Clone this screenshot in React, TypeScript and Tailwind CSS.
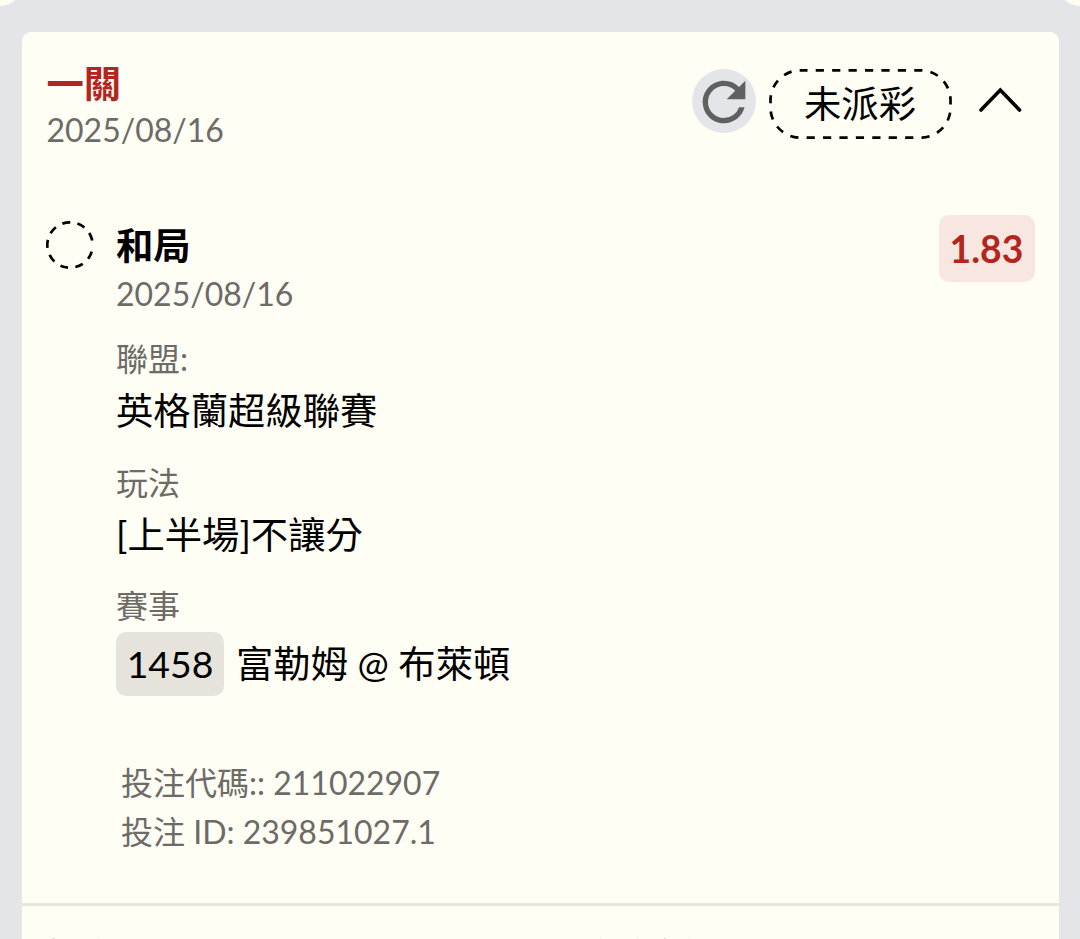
import type { ReactNode } from "react";
import { MdRefresh } from "react-icons/md";

const bet = {
  title: "一關",
  date: "2025/08/16",
  status: "未派彩",
  pick: "和局",
  odds: "1.83",
  league: "英格蘭超級聯賽",
  market: "[上半場]不讓分",
  matchNo: "1458",
  match: "富勒姆 @ 布萊頓",
  code: "211022907",
  id: "239851027.1",
};

function StatusPill({ children }: { children: ReactNode }) {
  return (
    <div className="relative flex h-[70px] w-[183px] items-center justify-center text-[37.33px] leading-[48px]">
      <svg className="absolute inset-0" width="183" height="70" fill="none">
        <rect
          x="1.5"
          y="1.3"
          width="180"
          height="67.4"
          rx="30"
          stroke="#000"
          strokeWidth="2.7"
          strokeDasharray="8.2 8.22"
          strokeDashoffset="1.2"
        />
      </svg>
      <span>{children}</span>
    </div>
  );
}

function PendingCircle() {
  return (
    <svg className="mt-[-3px] shrink-0" width="50" height="50" viewBox="0 0 50 50" fill="none">
      <circle
        cx="25"
        cy="25"
        r="22.7"
        stroke="#000"
        strokeWidth="2.7"
        strokeDasharray="8 7.3 8 7.3 8 7.3 8 7.3 8 7.3 8 7.3 8 7.3 8 7.3 8 40"
        transform="rotate(17 25 25)"
      />
    </svg>
  );
}

function Field({ label, children }: { label: string; children: ReactNode }) {
  return (
    <div>
      <p className="text-[32px] leading-[48px] text-[#6c6b67]">{label}</p>
      {children}
    </div>
  );
}

export default function App() {
  return (
    <div className="relative h-[939px] w-[1080px] overflow-hidden bg-[#e4e5e8] px-[21.5px] pt-8 font-[Lato,'Noto_Sans_CJK_TC',sans-serif] text-black">
      {/* notches of the ticket above */}
      <div className="absolute -top-[38px] -left-[22px] size-11 rounded-full bg-[#fffef5]" />
      <div className="absolute -top-[38px] -right-[22px] size-11 rounded-full bg-[#fffef5]" />

      <div className="h-[960px] rounded-t-[9px] bg-[#fffef5]">
        <header className="flex h-[191px] items-start justify-between pt-7 pr-[37px] pl-[25px]">
          <div>
            <h1 className="text-[37.33px] leading-[47px] font-bold text-[#b3261e]">{bet.title}</h1>
            <p className="text-[32px] leading-[46px] text-[#6c6b67]">{bet.date}</p>
          </div>
          <div className="flex items-start pt-[9px]">
            <button className="flex size-16 items-center justify-center rounded-full bg-[#e4e5e8] pt-[2px]">
              <MdRefresh className="size-16 shrink-0 text-[#5f6062]" />
            </button>
            <div className="ml-[13px]">
              <StatusPill>{bet.status}</StatusPill>
            </div>
            <svg className="mt-[17px] ml-[26px]" width="44" height="28" fill="none">
              <path d="M3 24 22.3 4 41.5 24" stroke="#000" strokeWidth="3.6" strokeLinecap="round" />
            </svg>
          </div>
        </header>

        <section className="flex h-[536px] items-start pr-6 pl-[23.5px]">
          <PendingCircle />
          <div className="ml-[21px] flex-1">
            <h2 className="text-[37.33px] leading-[46px] font-bold">{bet.pick}</h2>
            <p className="text-[32px] leading-[50px] text-[#6c6b67]">{bet.date}</p>
            <div className="mt-4 flex flex-col gap-[19.5px]">
              <Field label="聯盟:">
                <p className="text-[37.33px] leading-[56px]">{bet.league}</p>
              </Field>
              <Field label="玩法">
                <p className="text-[37.33px] leading-[56px]">{bet.market}</p>
              </Field>
              <Field label="賽事">
                <p className="mt-0.5 flex items-center text-[37.33px] leading-[64px]">
                  <span className="mr-3 w-[108px] rounded-[10px] bg-[#e6e3dd] text-center">{bet.matchNo}</span>
                  {bet.match}
                </p>
              </Field>
            </div>
          </div>
          <div className="-mt-2 h-[67px] w-24 rounded-[10px] bg-[#f8e6e0] text-center text-[37.33px] leading-[67px] font-bold text-[#b3261e]">
            {bet.odds}
          </div>
        </section>

        <div className="h-36 pl-[99.5px] text-[32px] leading-[48.5px] text-[#6c6b67]">
          <p>投注代碼:: {bet.code}</p>
          <p>投注 ID: {bet.id}</p>
        </div>

        <footer className="grid grid-cols-2 border-t-[3px] border-[#e8e5df] pt-6 pl-[25px] text-[32px] leading-[48px] text-[#6c6b67]">
          <span>投注</span>
          <span className="pl-[-3px]">最高獎金額</span>
        </footer>
      </div>
    </div>
  );
}
